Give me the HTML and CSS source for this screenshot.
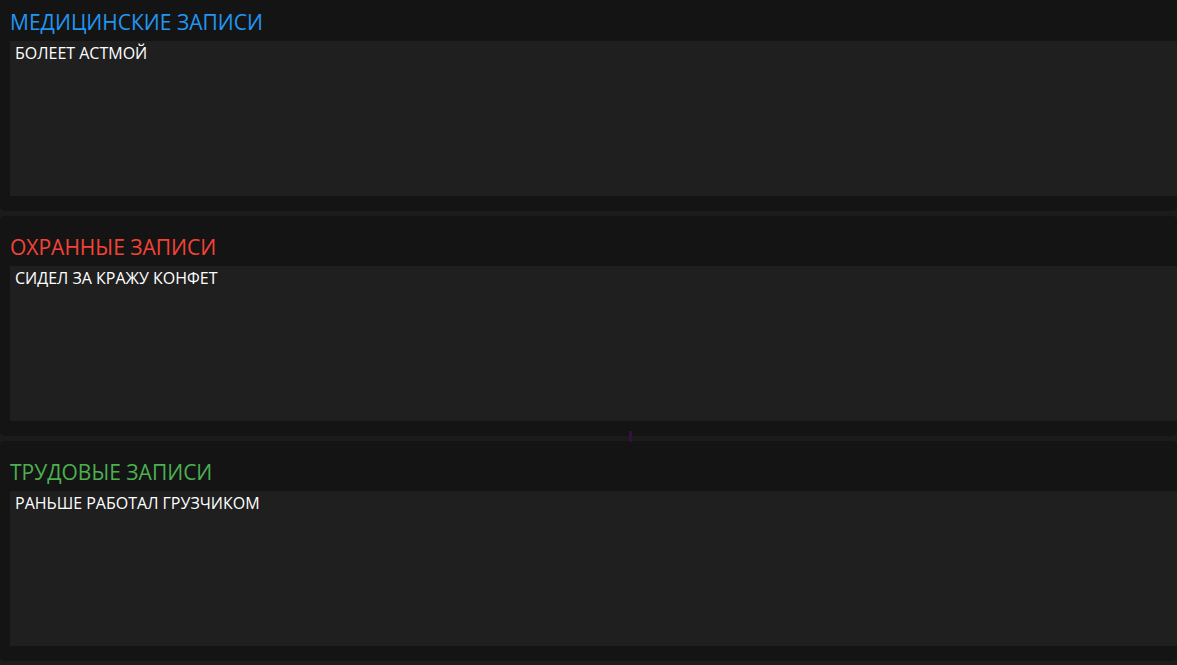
FILE: index.html
```html
<!DOCTYPE html>
<html lang="ru">
<head>
<meta charset="utf-8">
<link rel="stylesheet" href="styles.css">
</head>
<body>
<div class="list">
  <section class="panel panel-first">
    <h2 class="title title-blue">МЕДИЦИНСКИЕ ЗАПИСИ</h2>
    <div class="box">БОЛЕЕТ АСТМОЙ</div>
  </section>
  <section class="panel">
    <h2 class="title title-red">ОХРАННЫЕ ЗАПИСИ</h2>
    <div class="box">СИДЕЛ ЗА КРАЖУ КОНФЕТ</div>
  </section>
  <section class="panel">
    <h2 class="title title-green">ТРУДОВЫЕ ЗАПИСИ</h2>
    <div class="box">РАНЬШЕ РАБОТАЛ ГРУЗЧИКОМ</div>
  </section>
</div>
<div class="cursor-mark"></div>
</body>
</html>
```
FILE: styles.css
```css
html, body {
  margin: 0;
  padding: 0;
  background: #1b1b1b;
  overflow: hidden;
  height: 665px;
}
body {
  font-family: "Open Sans", "Noto Sans", sans-serif;
  position: relative;
}
.list {
  display: flex;
  flex-direction: column;
  gap: 5px;
  margin-top: -9px;
}
.panel {
  background: #141414;
  border-radius: 5px;
  height: 220px;
  box-sizing: border-box;
  padding: 16px 0 0 10px;
  display: flex;
  flex-direction: column;
}
.title {
  margin: 0;
  font-size: 21px;
  font-weight: 400;
  line-height: 30px;
  height: 34px;
}
.title-blue { color: #2196f3; }
.title-red { color: #f44336; }
.title-green { color: #4caf50; }
.box {
  background: #1f1f1f;
  height: 155px;
  box-sizing: border-box;
  padding: 1px 5px;
  color: #ffffff;
  font-size: 16px;
  font-weight: 500;
  line-height: 22px;
}
.cursor-mark {
  position: absolute;
  z-index: 5;
  left: 629px;
  top: 431px;
  width: 3px;
  height: 11px;
  background: #35103f;
}
```
